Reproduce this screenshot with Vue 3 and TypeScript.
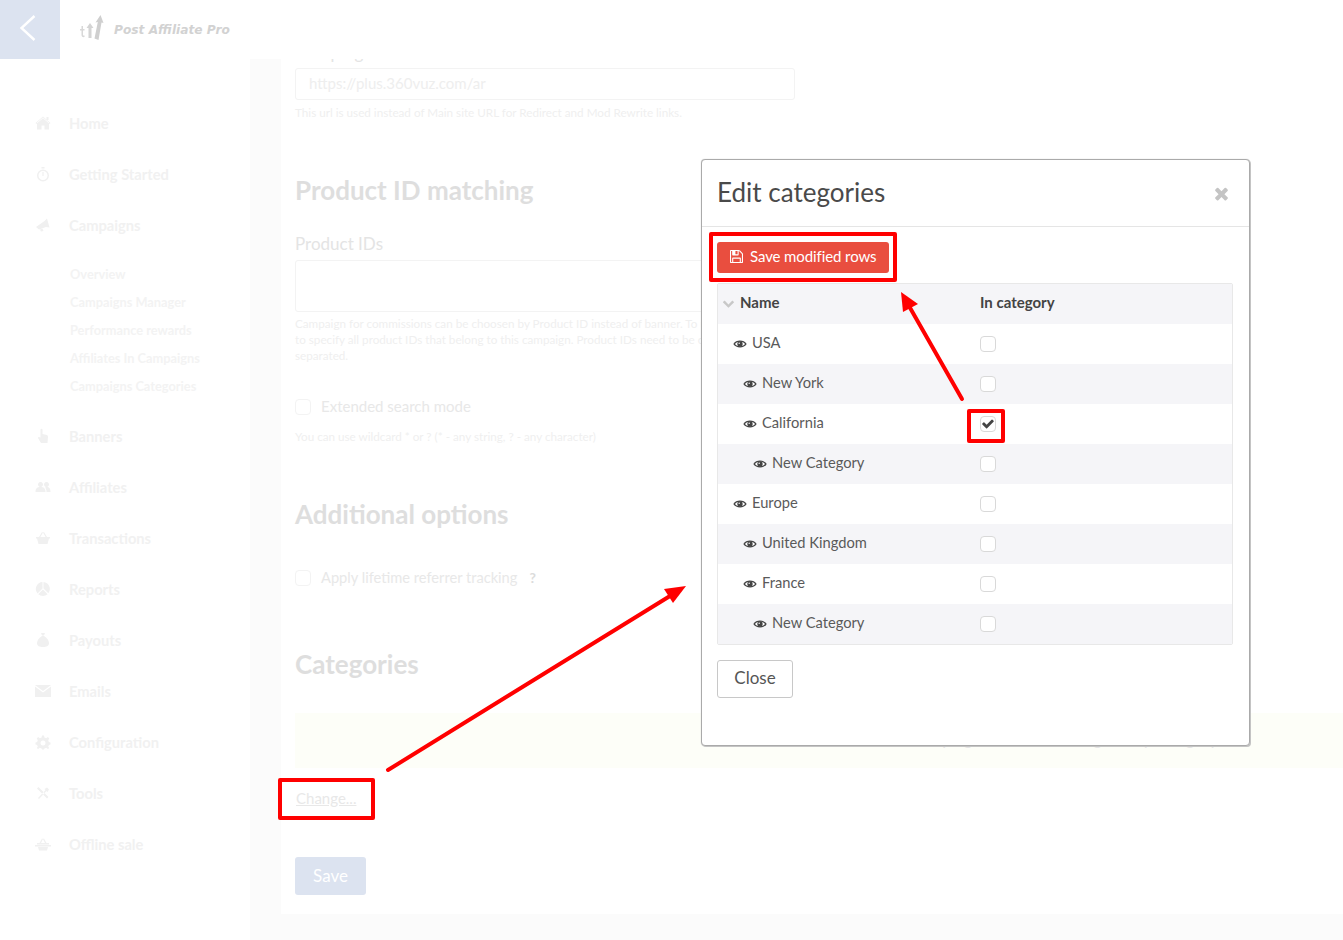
<script setup lang="ts">
interface NavItem { label: string; icon: string }
const icons: Record<string, string> = {
  home: 'M8 2.500 2 7.500V14.500H6.500V10.500H9.500V14.500H14V7.500Z M.5 8 8 1.500 15.500 8 14.800 8.900 8 3.300 1.200 8.900Z M11.500 2H13.500V5H11.500Z',
  watch: 'M8 3.500a6 6 0 1 0 0 12a6 6 0 1 0 0-12zM8 5a4.500 4.500 0 1 1 0 9a4.500 4.500 0 1 1 0-9z M6.500 1h3v1.500h-3z M7.400 6h1.200v4h-1.200z',
  megaphone: 'M1 10 9.500 4 12 1.500 14.500 10.500 11 10 4 12.500Z M5 12.500 7.500 11.700 8.500 14 6 14.500Z',
  hand: 'M5.500 1.500Q6.500 0 7.500 1.500V6L12 7Q13 7.500 13 9L12.500 15H6L3 10Q3 8.500 5.500 9.500Z',
  users: 'M5.500 3a2.500 2.500 0 1 0 .01 0z M.5 13c0-4 2-5 5-5s5 1 5 5z M11.500 3a2.500 2.500 0 1 0 .01 0z M11.500 13c0-2-.5-3.500-1.500-4.500c.5-.3 1-.5 1.500-.5c3 0 4 1.500 4 5z',
  basket: 'M1 7h14v1.500h-1L12.500 14h-9L2 8.500H1z M4 7l3-5 1 .6-2.600 4.400z M12 7 9 2 8 2.600 10.600 7z',
  pie: 'M7.500 1a7 7 0 0 0-5 11.500l5-5z M8.500 1v6.500l4.800 4.800A7 7 0 0 0 8.500 1z M3.200 13.200a7 7 0 0 0 9.400 0L8 8.500z',
  bag: 'M6 1h4l-1 2.500H7z M7 4h2c3 2 5 4.500 5 7c0 3-2.500 4-6 4s-6-1-6-4c0-2.500 2-5 5-7z',
  mail: 'M0 2h16L8 8z M0 3.500l8 6 8-6V14H0z',
  cog: 'M7 1.500H9L9.400 3.500 11.200 4.200 12.900 3.100 14.300 4.500 13.200 6.200 13.900 8 15.500 8.500V10.500L13.900 11 13.200 12.800 14.300 14 12.900 15 11.200 13.800 9.400 14.500 9 15.500H7L6.600 14.500 4.800 13.800 3.100 15 1.700 14 2.800 12.800 2.100 11 .5 10.500V8.500L2.100 8 2.800 6.200 1.700 4.500 3.100 3.100 4.800 4.200 6.600 3.500Z M8 6.500a2.500 2.500 0 1 0 0 5a2.500 2.500 0 1 0 0-5z',
  tools: 'M2 3.500 3.500 2 13.500 12 12 13.500z M3 13 10.500 5 9.500 4 12 2.500 14 4.500 12.500 7 11.500 6 4 14z',
  offline: 'M0 9h16v1.500H0z M2 7h12v1.500H2z M3 11h10l-1 3.500H4z M4.500 7l2.500-4.500 1 .6L6 7z M11.500 7 9 2.500l-1 .6L10 7z'
}
const nav: NavItem[] = [
  { label: 'Home', icon: 'home' },
  { label: 'Getting Started', icon: 'watch' },
  { label: 'Campaigns', icon: 'megaphone' }
]
const sub = ['Overview', 'Campaigns Manager', 'Performance rewards', 'Affiliates In Campaigns', 'Campaigns Categories']
const nav2: NavItem[] = [
  { label: 'Banners', icon: 'hand' },
  { label: 'Affiliates', icon: 'users' },
  { label: 'Transactions', icon: 'basket' },
  { label: 'Reports', icon: 'pie' },
  { label: 'Payouts', icon: 'bag' },
  { label: 'Emails', icon: 'mail' },
  { label: 'Configuration', icon: 'cog' },
  { label: 'Tools', icon: 'tools' },
  { label: 'Offline sale', icon: 'offline' }
]
const rows = [
  { name: 'USA', level: 0, on: false },
  { name: 'New York', level: 1, on: false },
  { name: 'California', level: 1, on: true },
  { name: 'New Category', level: 2, on: false },
  { name: 'Europe', level: 0, on: false },
  { name: 'United Kingdom', level: 1, on: false },
  { name: 'France', level: 1, on: false },
  { name: 'New Category', level: 2, on: false }
]
</script>

<template>
  <div class="page">
    <header class="header">
      <button class="back" aria-label="Back">
        <svg width="18" height="28" viewBox="0 0 18 28"><polyline points="15.500,2 2.500,14 15.500,26" fill="none" stroke="#fff" stroke-width="2.400" /></svg>
      </button>
      <div class="logo">
        <svg width="24" height="26" viewBox="0 0 24 26">
          <path d="M1.500 11H3V14H4.500V15.500H3V20C3 20.500 3.500 20.800 4.500 20.500V22C2.500 22.500 1.500 21.500 1.500 20V15.500H0V14H1.500Z" fill="#d8d8d8" />
          <path d="M10 8 13.500 13H11.500V23H8.500V13H6.500Z" fill="#d4d4d4" />
          <path d="M20.500 0 23.500 8 21.500 7.600 18.500 25 14.500 23.500 17.800 7 15.500 7.500Z" fill="#cfcfcf" />
        </svg>
        <span class="logo-text">Post Affiliate Pro</span>
      </div>
    </header>

    <div class="body">
      <aside class="sidebar">
        <a v-for="i in nav" :key="i.label" class="nav-item">
          <svg class="nav-icon" viewBox="0 0 16 16"><path :d="icons[i.icon]" fill-rule="evenodd" /></svg>
          <span>{{ i.label }}</span>
        </a>
        <div class="subnav">
          <a v-for="s in sub" :key="s" class="sub-item">{{ s }}</a>
        </div>
        <a v-for="i in nav2" :key="i.label" class="nav-item">
          <svg class="nav-icon" viewBox="0 0 16 16"><path :d="icons[i.icon]" fill-rule="evenodd" /></svg>
          <span>{{ i.label }}</span>
        </a>
      </aside>

      <main class="panel">
        <div class="scroll">
          <label class="field-label first">Campaign URL</label>
          <div class="input">https://plus.360vuz.com/ar</div>
          <p class="help h1">This url is used instead of Main site URL for Redirect and Mod Rewrite links.</p>

          <h2 class="title t1">Product ID matching</h2>
          <label class="field-label pid">Product IDs</label>
          <div class="textarea"></div>
          <p class="help h2x">Campaign for commissions can be choosen by Product ID instead of banner. To use it, you have<br />to specify all product IDs that belong to this campaign. Product IDs need to be comma<br />separated.</p>
          <div class="check-row r1"><span class="box"></span><span class="tx t-ext">Extended search mode</span></div>
          <p class="help h3">You can use wildcard * or ? (* - any string, ? - any character)</p>

          <h2 class="title t2">Additional options</h2>
          <div class="check-row r2"><span class="box"></span><span class="tx t-app">Apply lifetime referrer tracking</span><b class="q">?</b></div>

          <h2 class="title t3">Categories</h2>
          <div class="notice">This campaign does not belong to any category</div>
          <a class="change">Change...</a>
          <button class="save">Save</button>
        </div>
      </main>
    </div>

    <section class="modal">
      <div class="modal-head">
        <h3>Edit categories</h3>
        <svg class="close-x" viewBox="200 200 1300 1400"><path d="M1490 1322q0 40-28 68l-136 136q-28 28-68 28t-68-28l-294-294-294 294q-28 28-68 28t-68-28l-136-136q-28-28-28-68t28-68l294-294-294-294q-28-28-28-68t28-68l136-136q28-28 68-28t68 28l294 294 294-294q28-28 68-28t68 28l136 136q28 28 28 68t-28 68l-294 294 294 294q28 28 28 68z" /></svg>
      </div>
      <div class="modal-body">
        <button class="danger">
          <svg class="disk" viewBox="128 128 1536 1536"><path d="M512 1536h768v-384h-768v384zm896 0h128v-896q0-14-10-38.500t-20-34.500l-281-281q-10-10-34-20t-39-10v416q0 40-28 68t-68 28h-576q-40 0-68-28t-28-68v-416h-128v1280h128v-416q0-40 28-68t68-28h832q40 0 68 28t28 68v416zm-384-928v-320q0-13-9.500-22.500t-22.500-9.500h-192q-13 0-22.500 9.500t-9.500 22.500v320q0 13 9.500 22.500t22.500 9.500h192q13 0 22.500-9.500t9.500-22.500zm640 32v928q0 40-28 68t-68 28h-1344q-40 0-68-28t-28-68v-1344q0-40 28-68t68-28h928q40 0 88 20t76 48l280 280q28 28 48 76t20 88z" /></svg>
          <span>Save modified rows</span>
        </button>
        <div class="table">
          <div class="row head">
            <div class="name-col">
              <svg class="chev" viewBox="100 300 1600 1300"><path d="M1683 808l-742 741q-19 19-45 19t-45-19l-742-741q-19-19-19-45.500t19-45.500l166-165q19-19 45-19t45 19l531 531 531-531q19-19 45-19t45 19l166 165q19 19 19 45.500t-19 45.500z" /></svg>
              <span>Name</span>
            </div>
            <div class="cat-col">In category</div>
          </div>
          <div v-for="(r, idx) in rows" :key="idx" class="row" :class="{ alt: idx % 2 === 1 }">
            <div class="name-col" :class="'lvl' + r.level">
              <svg class="eye" viewBox="0 0 16 12">
                <path d="M0 6C3 .5 13 .5 16 6C13 11.500 3 11.500 0 6Z" fill="#444" />
                <path d="M2 6C4.500 2.500 11.500 2.500 14 6C11.500 9.500 4.500 9.500 2 6Z" fill="#fff" />
                <circle cx="8" cy="6" r="3.200" fill="#444" />
                <circle cx="7" cy="5" r=".9" fill="#fff" />
              </svg>
              <span>{{ r.name }}</span>
            </div>
            <div class="cat-col">
              <span class="cb">
                <svg v-if="r.on" class="tick" viewBox="100 300 1600 1250"><path d="M1671 566q0 40-28 68l-724 724-136 136q-28 28-68 28t-68-28l-136-136-362-362q-28-28-28-68t28-68l136-136q28-28 68-28t68 28l294 295 656-657q28-28 68-28t68 28l136 136q28 28 28 68z" /></svg>
              </span>
            </div>
          </div>
        </div>
        <button class="close-btn">Close</button>
      </div>
    </section>

    <svg class="marks" width="1343" height="940" viewBox="0 0 1343 940">
      <g fill="none" stroke="#f00" stroke-width="4" stroke-linejoin="round">
        <rect x="711" y="234" width="184" height="46" />
        <rect x="969" y="411" width="34" height="30" />
        <rect x="280" y="780" width="93" height="38" />
      </g>
      <g stroke="#f00" stroke-width="4" stroke-linecap="round">
        <line x1="388" y1="770" x2="670" y2="596" />
        <line x1="962" y1="399" x2="909" y2="306" />
      </g>
      <g fill="#f00">
        <polygon points="686,586 664,589 673,603" />
        <polygon points="901,292 918,304 903,312" />
      </g>
    </svg>
  </div>
</template>

<style>
html, body { margin: 0; background: #fff; }
</style>

<style scoped>
.page {
  position: relative;
  width: 1343px;
  height: 940px;
  overflow: hidden;
  display: flex;
  flex-direction: column;
  background: #fff;
  font-family: Lato, "Open Sans", sans-serif;
  color: #555;
}
.header {
  height: 59px;
  flex: none;
  display: flex;
  align-items: center;
  background: #fff;
}
.back {
  width: 60px;
  height: 59px;
  border: 0;
  padding: 0 4px 4px 0;
  background: #dce3f0;
  display: flex;
  align-items: center;
  justify-content: center;
}
.logo { display: flex; align-items: center; margin-left: 20px; gap: 10px; }
.logo svg { margin-top: -4px; }
.logo-text {
  font: italic 700 12.200px "DejaVu Sans", sans-serif;
  color: #d2d2d2;
}
.body {
  flex: 1;
  display: flex;
  background: #fbfbfb;
  min-height: 0;
}
.sidebar {
  width: 250px;
  flex: none;
  background: #fff;
  padding-top: 38px;
  box-sizing: border-box;
}
.nav-item {
  height: 51px;
  display: flex;
  align-items: center;
  gap: 18px;
  padding-left: 35px;
  font-size: 14.700px;
  font-weight: 700;
  color: #f1f1f1;
}
.nav-icon { width: 16px; height: 16px; fill: #f0f0f0; flex: none; }
.subnav { margin: 10px 0 10px; }
.sub-item {
  display: block;
  height: 28px;
  line-height: 28px;
  padding-left: 70px;
  font-size: 12.800px;
  font-weight: 700;
  color: #f3f3f3;
}
.panel {
  margin-left: 31px;
  flex: 1;
  min-width: 0;
  height: 855px;
  overflow: hidden;
  background: #fff;
}
.scroll { margin-top: -16px; padding-left: 14px; }
.field-label { display: block; line-height: 20px; font-size: 17px; color: #e4e4e4; }
.first { letter-spacing: .6px; }
.pid { margin-top: 29px; }
.input {
  margin-top: 5px;
  width: 500px;
  height: 32px;
  line-height: 28px;
  box-sizing: border-box;
  border: 1px solid #f3f3f3;
  border-radius: 3px;
  padding-left: 13px;
  font-size: 15px;
  color: #eeeeee;
}
.textarea {
  margin-top: 6px;
  width: 500px;
  height: 52px;
  box-sizing: border-box;
  border: 1px solid #f3f3f3;
  border-radius: 3px;
}
.help { margin: 0; font-size: 11.700px; line-height: 16px; color: #efefef; white-space: nowrap; }
.h1 { margin-top: 4px; }
.h2x { margin-top: 3px; }
.h3 { margin-top: 11px; }
.title { margin: 0; font-size: 26px; font-weight: 700; line-height: 30px; color: #dedede; }
.t1 { margin-top: 55px; }
.t2 { margin-top: 55px; }
.t3 { margin-top: 61px; }
.check-row {
  display: flex;
  align-items: center;
  height: 20px;
  gap: 10px;
  color: #e8e8e8;
}
.tx { margin-bottom: 2px; }
.t-ext { font-size: 15px; }
.t-app { font-size: 14.650px; }
.r1 { margin-top: 34px; }
.r2 { margin-top: 39px; }
.box {
  width: 16px;
  height: 16px;
  border: 1px solid #f3f3f3;
  border-radius: 4px;
  box-sizing: border-box;
}
.q { margin-left: 2px; margin-bottom: 2px; font-size: 14px; color: #dcdcdc; }
.notice {
  margin-top: 34px;
  height: 55px;
  line-height: 53px;
  background: #fdfef8;
  box-sizing: border-box;
  text-align: right;
  padding-right: 125px;
  font-size: 16.500px;
  color: #e6e6e6;
}
.change {
  display: block;
  margin-top: 20px;
  width: max-content;
  margin-left: 1px;
  line-height: 20px;
  font-size: 15px;
  color: #e8e8e8;
  text-decoration: underline;
}
.save {
  display: block;
  margin-top: 49px;
  width: 71px;
  height: 38px;
  border: 0;
  border-radius: 3px;
  padding: 0 0 2px;
  background: #dce3f0;
  color: #fff;
  font: 17px Lato, sans-serif;
}
.modal {
  position: absolute;
  left: 701px;
  top: 159px;
  width: 549px;
  height: 587px;
  box-sizing: border-box;
  border: 1px solid #aaaaaa;
  border-radius: 4px;
  box-shadow: 1px 1px 0 #c4c4c4, 0 0 1px #b8b8b8;
  background: #fff;
}
.modal-head {
  height: 67px;
  box-sizing: border-box;
  border-bottom: 1px solid #e5e5e5;
  display: flex;
  align-items: center;
  justify-content: space-between;
  padding: 0 21px 0 14px;
}
.modal-head h3 { margin: 0 0 2px 1px; font-size: 26px; font-weight: 400; color: #4a4a4a; }
.close-x { width: 14px; height: 15px; fill: #c4c4c4; margin-top: 1px; }
.modal-body { padding: 15px 0 0 15px; }
.danger {
  display: flex;
  align-items: center;
  gap: 7px;
  width: 172px;
  height: 31px;
  border: 0;
  border-radius: 3px;
  padding: 0 0 2px 13px;
  background: #e94e3f;
  color: #fff;
  font: 15px Lato, sans-serif;
  letter-spacing: -.1px;
  white-space: nowrap;
}
.danger span { margin-bottom: 2px; }
.disk { width: 13px; height: 13px; fill: #fff; flex: none; }
.table {
  margin-top: 10px;
  width: 516px;
  box-sizing: border-box;
  border: 1px solid #e8e8e8;
  border-radius: 2px;
}
.row { display: flex; height: 40px; align-items: center; font-size: 14.700px; color: #5a5a5a; }
.row.alt, .row.head { background: #f5f5f8; }
.row.head { color: #444; font-weight: 700; font-size: 15px; }
.name-col { width: 262px; display: flex; align-items: center; gap: 5px; box-sizing: border-box; }
.name-col span { margin-bottom: 4px; }
.head .name-col { padding-left: 5px; gap: 6px; }
.head .cat-col { margin-bottom: 4px; }
.lvl0 { padding-left: 15px; }
.lvl1 { padding-left: 25px; }
.lvl2 { padding-left: 35px; }
.chev { width: 11px; height: 9px; fill: #c8c8c8; margin-bottom: 2px; }
.eye { width: 14px; height: 10px; flex: none; }
.cb {
  display: flex;
  align-items: center;
  justify-content: center;
  width: 16px;
  height: 16px;
  box-sizing: border-box;
  border: 1px solid #d9d9d9;
  border-radius: 4px;
  background: #fff;
}
.tick { width: 12px; height: 10px; fill: #444; }
.close-btn {
  display: block;
  margin-top: 15px;
  width: 76px;
  height: 38px;
  border: 1px solid #c8c8c8;
  border-radius: 3px;
  padding: 0 0 3px;
  background: #fff;
  color: #555;
  font: 17px Lato, sans-serif;
}
.marks { position: absolute; left: 0; top: 0; pointer-events: none; }
</style>
